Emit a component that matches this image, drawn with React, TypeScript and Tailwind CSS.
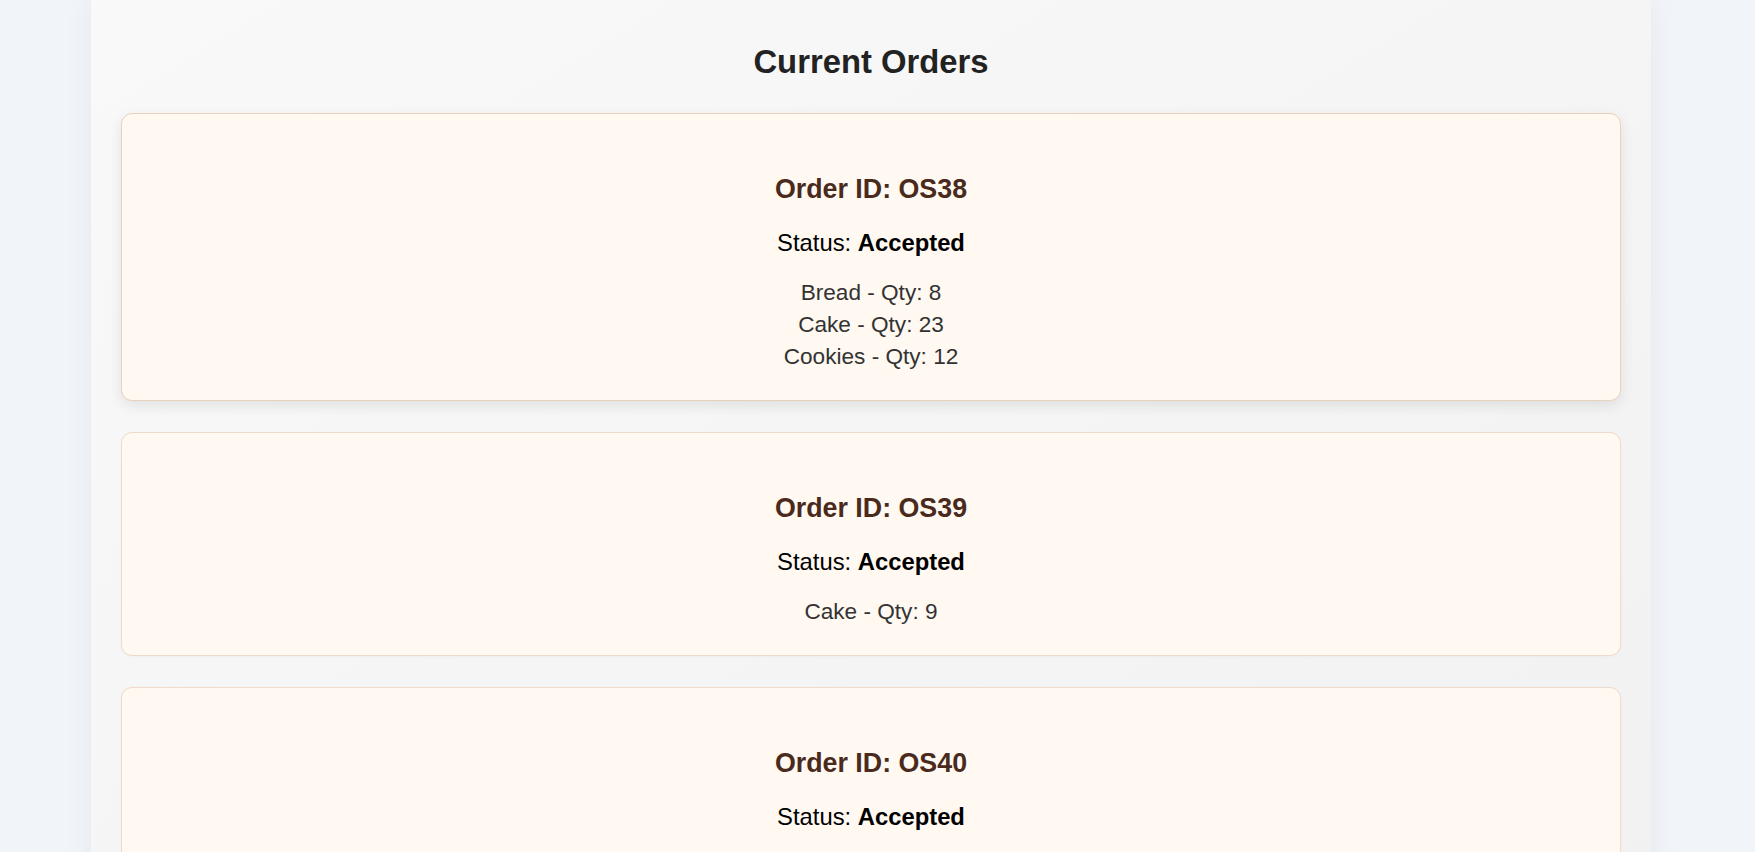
import React from "react";

type Order = { id: string; status: string; items: { name: string; qty: number }[] };

const orders: Order[] = [
  { id: "OS38", status: "Accepted", items: [ { name: "Bread", qty: 8 }, { name: "Cake", qty: 23 }, { name: "Cookies", qty: 12 } ] },
  { id: "OS39", status: "Accepted", items: [ { name: "Cake", qty: 9 } ] },
  { id: "OS40", status: "Accepted", items: [ { name: "Bread", qty: 5 } ] },
];

function OrderCard({ order, active }: { order: Order; active: boolean }) {
  return (
    <div
      className={
        active
          ? "rounded-[11px] border border-[#e8d2bd] bg-[#fff9f2] pt-[60px] pb-[27px] text-center shadow-[0_5px_14px_rgba(0,0,0,0.09)]"
          : "rounded-[11px] border border-[#f0dacb] bg-[#fff9f2] pt-[60px] pb-[27px] text-center shadow-[0_1px_3px_rgba(0,0,0,0.03)]"
      }
    >
      <h3 className="text-[26.8px] leading-[30px] font-bold text-[#4a2a1c]">Order ID: {order.id}</h3>
      <p className="mt-[25px] text-[23.8px] leading-[28px] text-black">
        Status: <strong className="font-bold">{order.status}</strong>
      </p>
      <div className="mt-[20px] text-[22.6px] leading-[32px] text-[#333333]">
        {order.items.map((it, i) => (
          <div key={i}>
            {it.name} - Qty: {it.qty}
          </div>
        ))}
      </div>
    </div>
  );
}

export default function App() {
  return (
    <div
      className="min-h-screen bg-[#f1f5fa] pr-[13px]"
      style={{ fontFamily: '"Liberation Sans", Arial, Helvetica, sans-serif' }}
    >
      <div className="mx-auto min-h-screen w-[1560px] bg-gradient-to-br from-[#f9f9f9] to-[#f1f1f1] px-[30px] pt-[43px] pb-[40px] shadow-[0_0_30px_rgba(0,0,0,0.06)]">
        <h1 className="text-center text-[32.8px] leading-[37px] font-bold text-[#222222]">Current Orders</h1>
        <div className="mt-[33px] flex flex-col gap-[31px]">
          {orders.map((o, i) => (
            <OrderCard key={o.id} order={o} active={i === 0} />
          ))}
        </div>
      </div>
    </div>
  );
}
